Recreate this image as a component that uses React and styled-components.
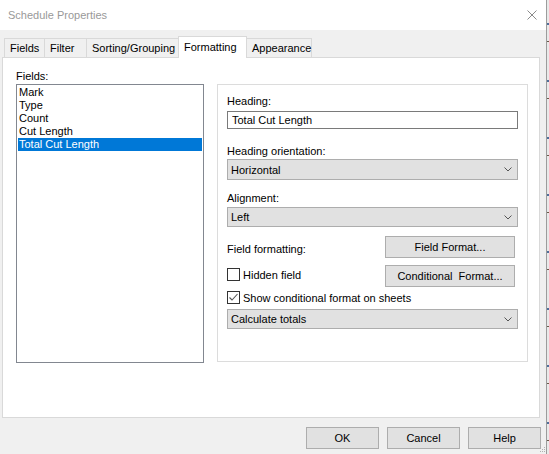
import React from 'react';
import styled, { createGlobalStyle } from 'styled-components';

const GlobalStyle = createGlobalStyle`
  html, body { margin: 0; padding: 0; background: #f0f0f0; }
  body {
    font-family: "Liberation Sans", Arial, sans-serif;
    font-size: 11px;
    color: #000;
  }
  * { box-sizing: border-box; }
`;

const Screen = styled.div`
  width: 549px;
  height: 454px;
  display: flex;
  overflow: hidden;
  background: #f0f0f0;
`;

const Dialog = styled.div`
  position: relative;
  width: 546px;
  height: 454px;
  display: flex;
  flex-direction: column;
  background: #f0f0f0;
  flex-shrink: 0;
`;

const Edge = styled.div`
  width: 3px;
  height: 454px;
  border-left: 1px solid #9c9c9c;
  background: repeating-linear-gradient(180deg, #e9e9e9 0 23px, #4f6f9a 23px 25px, #e9e9e9 25px 41px, #6a5a4a 41px 42px, #e9e9e9 42px 57px);
`;

const TitleBar = styled.div`
  height: 30px;
  flex-shrink: 0;
  background: #fff;
  display: flex;
  align-items: center;
  justify-content: space-between;
  padding: 0 9px 1px 8px;
`;

const Title = styled.span`
  color: #999;
  font-size: 11px;
`;

const CloseIcon = styled.svg`
  width: 10px;
  height: 10px;
  display: block;
`;

const Body = styled.div`
  flex: 1;
  display: flex;
  flex-direction: column;
`;

const TabStrip = styled.div`
  height: 27px;
  display: flex;
  align-items: flex-end;
  padding-left: 4px;
`;

const Tab = styled.div`
  position: relative;
  width: ${p => p.$w}px;
  height: ${p => (p.$active ? 22 : 19)}px;
  margin-left: ${p => (p.$first ? 0 : -1)}px;
  margin-bottom: ${p => (p.$active ? -1 : 0)}px;
  padding: 0 0 ${p => (p.$active ? 2 : 0)}px 5px;
  display: flex;
  align-items: center;
  white-space: nowrap;
  border: 1px solid #d9d9d9;
  border-bottom: none;
  background: ${p => (p.$active ? '#fff' : '#f0f0f0')};
  z-index: ${p => (p.$active ? 2 : 1)};
`;

const Panel = styled.div`
  margin-left: 2px;
  width: 538px;
  height: 361px;
  background: #fff;
  border: 1px solid #d9d9d9;
  display: flex;
  align-items: flex-start;
  padding: 11px 0 0 13px;
`;

const LeftColumn = styled.div`
  width: 188px;
  display: flex;
  flex-direction: column;
`;

const Label = styled.div`
  height: 14px;
  line-height: 14px;
  margin-top: ${p => p.$mt || 0}px;
  white-space: nowrap;
`;

const ListBox = styled.div`
  margin-top: 1px;
  height: 279px;
  border: 1px solid #828790;
  padding: 1px;
  display: flex;
  flex-direction: column;
`;

const ListItem = styled.div`
  height: 13px;
  line-height: 13px;
  padding-left: 1px;
  background: ${p => (p.$selected ? '#0078d7' : 'transparent')};
  color: ${p => (p.$selected ? '#fff' : '#000')};
  white-space: nowrap;
`;

const GroupBox = styled.div`
  margin: 15px 0 0 13px;
  width: 311px;
  height: 278px;
  border: 1px solid #dcdcdc;
  padding: 9px 9px 0 9px;
  display: flex;
  flex-direction: column;
`;

const TextInput = styled.input`
  margin-top: ${p => p.$mt || 0}px;
  height: 18px;
  width: 100%;
  border: 1px solid #7a7a7a;
  padding: 0 0 0 4px;
  font: inherit;
  color: #000;
  background: #fff;
  outline: none;
`;

const SelectBox = styled.div`
  margin-top: ${p => p.$mt || 0}px;
  height: ${p => p.$h || 21}px;
  border: 1px solid #adadad;
  background: #e1e1e1;
  display: flex;
  align-items: center;
  justify-content: space-between;
  padding: 0 5px 0 3px;
`;

const Chevron = styled.svg`
  width: 8px;
  height: 5px;
  display: block;
`;

const Row = styled.div`
  margin-top: ${p => p.$mt || 0}px;
  display: flex;
  align-items: ${p => p.$align || 'center'};
  justify-content: space-between;
  padding-right: 3px;
`;

const RowLabel = styled.span`
  padding-top: 3px;
`;

const PushButton = styled.div`
  width: ${p => p.$w || 130}px;
  height: 22px;
  border: 1px solid #adadad;
  background: #e1e1e1;
  display: flex;
  align-items: center;
  justify-content: center;
  white-space: pre;
  flex-shrink: 0;
`;

const CheckLine = styled.label`
  display: flex;
  align-items: center;
  gap: 3px;
  margin-top: ${p => p.$mt || 0}px;
  height: 13px;
  white-space: nowrap;
`;

const Box = styled.span`
  width: 13px;
  height: 13px;
  border: 1px solid #333;
  background: #fff;
  display: flex;
  align-items: center;
  justify-content: center;
  flex-shrink: 0;
`;

const Footer = styled.div`
  display: flex;
  justify-content: flex-end;
  gap: 8px;
  padding: 9px 5px 0 0;
`;

const Grip = styled.svg`
  position: absolute;
  right: 0;
  bottom: 1px;
  width: 7px;
  height: 7px;
`;

function ChevronDown() {
  return (
    <Chevron viewBox="0 0 8 5">
      <polyline points="0.5,0.5 4,4 7.5,0.5" fill="none" stroke="#555" strokeWidth="1" />
    </Chevron>
  );
}

function Select({ children, mt, h }) {
  return (
    <SelectBox $mt={mt} $h={h}>
      <span>{children}</span>
      <ChevronDown />
    </SelectBox>
  );
}

function CheckBox({ checked, children, mt }) {
  return (
    <CheckLine $mt={mt}>
      <Box>
        {checked && (
          <svg width="11" height="11" viewBox="0 0 11 11">
            <polyline points="1.5,5.5 4,8 9.5,2" fill="none" stroke="#555" strokeWidth="1.1" />
          </svg>
        )}
      </Box>
      <span>{children}</span>
    </CheckLine>
  );
}

const tabs = [
  { name: 'Fields', w: 41 },
  { name: 'Filter', w: 43 },
  { name: 'Sorting/Grouping', w: 93 },
  { name: 'Formatting', w: 69, active: true },
  { name: 'Appearance', w: 66 },
];

const fields = ['Mark', 'Type', 'Count', 'Cut Length', 'Total Cut Length'];

export default function App() {
  return (
    <>
      <GlobalStyle />
      <Screen>
        <Dialog>
          <TitleBar>
            <Title>Schedule Properties</Title>
            <CloseIcon viewBox="0 0 10 10">
              <path d="M0.5 0.5 L9.5 9.5 M9.5 0.5 L0.5 9.5" stroke="#8a8a8a" strokeWidth="1" />
            </CloseIcon>
          </TitleBar>
          <Body>
            <TabStrip>
              {tabs.map((t, i) => (
                <Tab key={t.name} $w={t.w} $active={t.active} $first={i === 0}>
                  {t.name}
                </Tab>
              ))}
            </TabStrip>
            <Panel>
              <LeftColumn>
                <Label>Fields:</Label>
                <ListBox>
                  {fields.map(f => (
                    <ListItem key={f} $selected={f === 'Total Cut Length'}>{f}</ListItem>
                  ))}
                </ListBox>
              </LeftColumn>
              <GroupBox>
                <Label>Heading:</Label>
                <TextInput $mt={3} defaultValue="Total Cut Length" readOnly />
                <Label $mt={15}>Heading orientation:</Label>
                <Select mt={1}>Horizontal</Select>
                <Label $mt={11}>Alignment:</Label>
                <Select mt={2} h={20}>Left</Select>
                <Row $mt={9}>
                  <RowLabel>Field formatting:</RowLabel>
                  <PushButton>Field Format...</PushButton>
                </Row>
                <Row $mt={7} $align="flex-start">
                  <CheckBox mt={3}>Hidden field</CheckBox>
                  <PushButton>{'Conditional  Format...'}</PushButton>
                </Row>
                <CheckBox checked mt={4}>Show conditional format on sheets</CheckBox>
                <Select mt={5} h={20}>Calculate totals</Select>
              </GroupBox>
            </Panel>
            <Footer>
              <PushButton $w={73}>OK</PushButton>
              <PushButton $w={73}>Cancel</PushButton>
              <PushButton $w={73}>Help</PushButton>
            </Footer>
          </Body>
          <Grip viewBox="0 0 7 7">
            <rect x="5" y="1" width="1" height="1" fill="#b0b0b0" />
            <rect x="3" y="3" width="1" height="1" fill="#b0b0b0" />
            <rect x="5" y="3" width="1" height="1" fill="#b0b0b0" />
            <rect x="1" y="5" width="1" height="1" fill="#b0b0b0" />
            <rect x="3" y="5" width="1" height="1" fill="#b0b0b0" />
            <rect x="5" y="5" width="1" height="1" fill="#b0b0b0" />
          </Grip>
        </Dialog>
        <Edge />
      </Screen>
    </>
  );
}
